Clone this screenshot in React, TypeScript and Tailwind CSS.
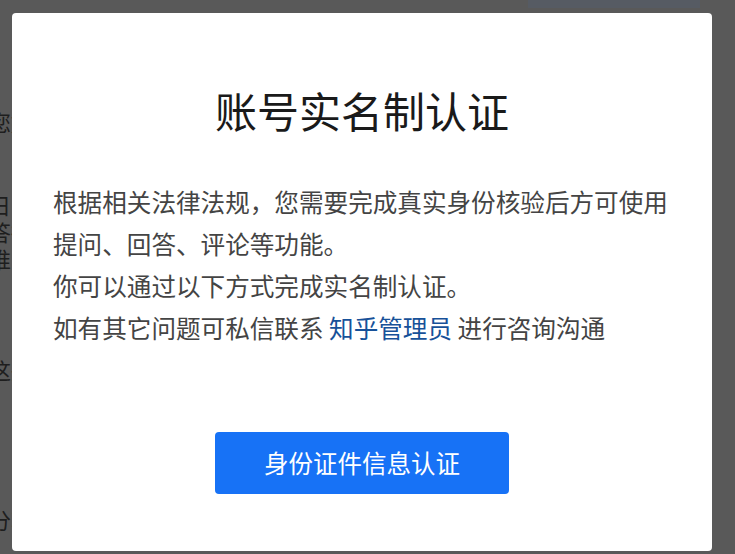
import React from "react";

const font = {
  fontFamily: '"Noto Sans CJK SC", "Noto Sans", "Liberation Sans", sans-serif',
};

export default function App() {
  return (
    <div
      className="relative w-[735px] h-[554px] overflow-hidden bg-[#595959]"
      style={font}
    >
      {/* page behind the overlay */}
      <div className="flex flex-col -ml-[11px] text-[22px] leading-[27px] text-[#1e1e1e] whitespace-nowrap">
        <div className="mt-[108px]">您好</div>
        <div className="mt-[56px]">日常</div>
        <div>答得</div>
        <div>推出</div>
        <div className="mt-[84px]">这些</div>
        <div className="mt-[123px]">分享</div>
      </div>
      <div className="absolute top-0 left-[528px] w-[172px] h-[8px] bg-[#565b63]" />

      {/* modal */}
      <div className="absolute left-[12px] top-[13px] w-[700px] h-[538px] bg-white rounded-[4px] flex flex-col">
        <h1 className="mt-[76px] text-center text-[42px] leading-[42px] font-normal text-[#1a1a1a]">
          账号实名制认证
        </h1>
        <div className="mt-[49px] px-[41px] text-[24.6px] leading-[42px] text-[#444444] whitespace-nowrap">
          <div>根据相关法律法规，您需要完成真实身份核验后方可使用</div>
          <div>提问、回答、评论等功能。</div>
          <div>你可以通过以下方式完成实名制认证。</div>
          <div>
            如有其它问题可私信联系 <span className="text-[#175199]">知乎管理员</span> 进行咨询沟通
          </div>
        </div>
        <button className="mt-[84px] self-center w-[294px] h-[62px] rounded-[4px] bg-[#1772f6] text-white text-[24.5px] leading-[24px]">
          身份证件信息认证
        </button>
      </div>
    </div>
  );
}
